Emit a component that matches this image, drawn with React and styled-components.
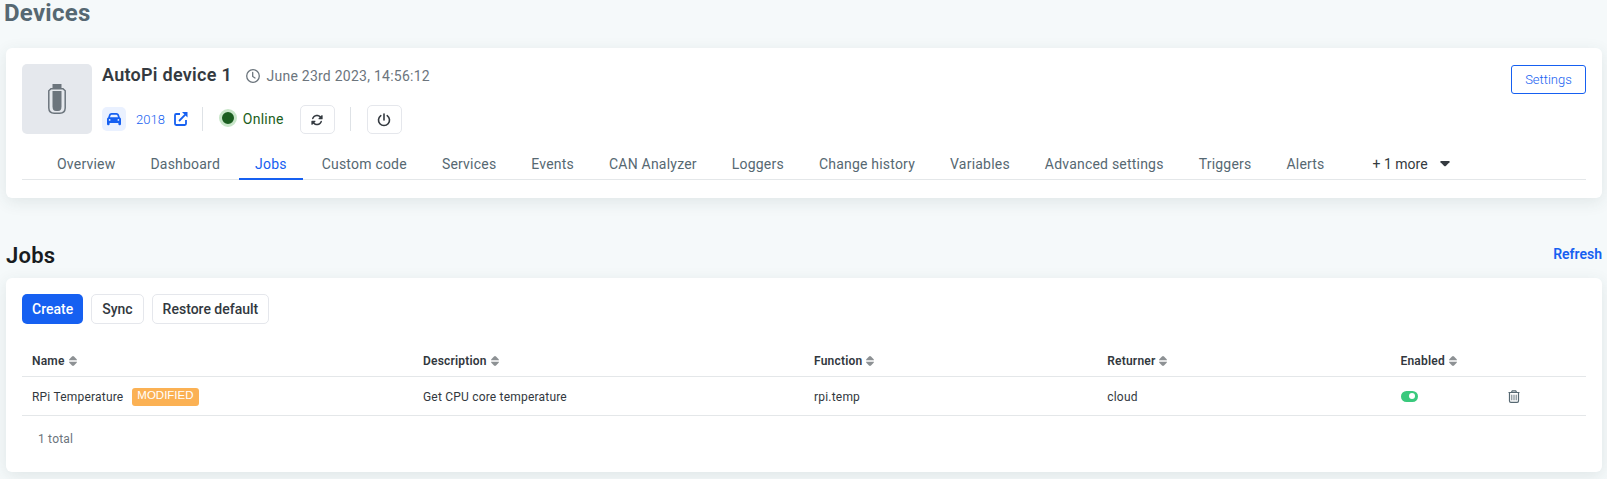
import React from "react";
import styled, { createGlobalStyle, css } from "styled-components";
import { FaCar, FaRotate } from "react-icons/fa6";

const GlobalStyle = createGlobalStyle`
  *, *::before, *::after { box-sizing: border-box; }
  html, body { margin: 0; padding: 0; }
  body {
    background: #f5f9fa;
    color: #32383e;
    font-family: Roboto, "Liberation Sans", sans-serif;
    font-size: 14px;
    overflow: hidden;
  }
  svg { display: block; flex: none; }
`;

const Page = styled.main`
  height: 479px;
  overflow: hidden;
  padding: 0 5px 0 6px;
`;

const PageTitle = styled.h1`
  margin: 0 0 22px -2px;
  height: 26px;
  font-size: 24px;
  line-height: 26px;
  font-weight: 700;
  letter-spacing: 0.25px;
  color: #566872;
`;

const Card = styled.section`
  background: #fff;
  border-radius: 6px;
  padding: 16px;
  box-shadow: 0 4px 16px rgba(40, 70, 70, 0.1);
`;

const DeviceCard = styled(Card)`
  height: 150px;
`;

const DeviceHeader = styled.header`
  display: flex;
  align-items: flex-start;
`;

const Thumb = styled.div`
  width: 70px;
  height: 70px;
  border-radius: 5px;
  background: #e5e8ed;
  display: flex;
  align-items: center;
  justify-content: center;
`;

const DeviceInfo = styled.div`
  flex: 1;
  margin-left: 10px;
`;

const TitleRow = styled.div`
  display: flex;
  align-items: center;
  height: 23px;
`;

const DeviceName = styled.h2`
  margin: 0 14px 2px 0;
  font-size: 18px;
  line-height: 22px;
  font-weight: 600;
  letter-spacing: 0.27px;
  color: #343a40;
`;

const Timestamp = styled.span`
  margin-left: 6.5px;
  color: #6c757d;
  line-height: 22px;
  letter-spacing: 0.25px;
`;

const StatusRow = styled.div`
  display: flex;
  align-items: center;
  height: 29px;
  margin-top: 18px;
`;

const VehicleBadge = styled.span`
  width: 24px;
  height: 24px;
  margin-bottom: 1px;
  border-radius: 5px;
  background: #eaf1ff;
  color: #1660f1;
  display: flex;
  align-items: center;
  justify-content: center;
`;

const VehicleLink = styled.a`
  display: flex;
  align-items: center;
  gap: 9px;
  margin: 0 0 1px 10px;
  color: #1660f1;
  font-weight: 300;
  font-size: 13px;
`;

const Divider = styled.span`
  width: 1px;
  height: 24px;
  background: #dee2e6;
  margin: 0 ${(p) => p.$after}px 1px ${(p) => p.$before}px;
`;

const StatusDot = styled.span`
  width: 18px;
  height: 18px;
  margin-top: -3px;
  border-radius: 50%;
  border: 3px solid #c8e6c9;
  background: #1b5e20;
`;

const StatusText = styled.span`
  margin: 0 16px 2px 6px;
  letter-spacing: 0.25px;
  color: #1b5e20;
`;

const IconButton = styled.button`
  width: 35px;
  height: 29px;
  padding: 0;
  border: 1px solid #e5e7ec;
  border-radius: 5px;
  background: #fff;
  color: #343a40;
  display: flex;
  align-items: center;
  justify-content: center;
`;

const SettingsButton = styled.button`
  width: 75px;
  height: 29px;
  margin-top: 1px;
  padding: 0;
  border: 1px solid #1660f1;
  border-radius: 3px;
  background: #fff;
  color: #1660f1;
  font: 300 13px Roboto, sans-serif;
`;

const Tabs = styled.nav`
  display: flex;
  height: 32px;
  margin-top: 14px;
  padding-left: 19px;
  gap: 3px;
  border-bottom: 1px solid #e4e7e9;
`;

const Tab = styled.a`
  height: 32px;
  padding: 0 16px;
  line-height: 32px;
  letter-spacing: 0.21px;
  color: #566872;
  white-space: nowrap;
  ${(p) =>
    p.$active &&
    css`
      color: #1660f1;
      box-shadow: inset 0 -2px #1660f1;
    `}
`;

const MoreTab = styled.span`
  display: flex;
  align-items: center;
  gap: 12.5px;
  margin-left: 29px;
  color: #343a40;
`;

const SectionHeader = styled.div`
  display: flex;
  justify-content: space-between;
  height: 80px;
  padding-top: 43px;
`;

const SectionTitle = styled.h2`
  margin: 0;
  padding-top: 1px;
  font-size: 22px;
  line-height: 28px;
  font-weight: 600;
  letter-spacing: 0.25px;
  color: #181c20;
`;

const RefreshLink = styled.a`
  color: #1660f1;
  font-weight: 600;
  line-height: 26px;
`;

const JobsCard = styled(Card)`
  height: 194px;
`;

const Actions = styled.div`
  display: flex;
  gap: 8px;
`;

const Button = styled.button`
  height: 30px;
  padding: 0 10px;
  border: ${(p) => (p.$primary ? "0" : "1px solid #e5e7ec")};
  border-radius: 5px;
  background: ${(p) => (p.$primary ? "#1660f1" : "#fff")};
  color: ${(p) => (p.$primary ? "#fff" : "#32383e")};
  font: 500 14px Roboto, sans-serif;
`;

const Table = styled.div`
  margin-top: 21px;
  font-size: 12px;
`;

const Row = styled.div`
  display: grid;
  grid-template-columns: 4fr 4fr 3fr 3fr 1fr 1fr;
  align-items: center;
  height: ${(p) => (p.$head ? 32 : 39)}px;
  border-bottom: 1px solid #e4e7e9;
  font-weight: ${(p) => (p.$head ? 600 : 400)};
  letter-spacing: 0.2px;
`;

const Cell = styled.div`
  display: flex;
  align-items: center;
  padding-left: 10px;
  white-space: nowrap;
`;

const TextCell = styled(Cell)`
  padding-top: 2px;
`;

const TrashCell = styled(Cell)`
  padding-left: 19.5px;
`;

const Badge = styled.span`
  width: 67px;
  height: 18px;
  margin-left: 8.5px;
  border-radius: 3px;
  background: #fbb154;
  color: #fff;
  font: 11.5px/15px "Liberation Sans", sans-serif;
  letter-spacing: 0;
  text-align: center;
`;

const Toggle = styled.span`
  width: 17px;
  height: 11px;
  padding: 0 3px;
  border-radius: 6px;
  background: #3ac97d;
  display: flex;
  align-items: center;
  justify-content: flex-end;
  &::after {
    content: "";
    width: 6px;
    height: 6px;
    border-radius: 50%;
    background: #fff;
  }
`;

const Total = styled.div`
  padding: 16px 16px 0;
  font-size: 12px;
  line-height: 14px;
  letter-spacing: 0.2px;
  color: #6c757d;
`;

const BatteryIcon = () => (
  <svg width="18" height="30" viewBox="0 0 18 30" fill="none">
    <path d="M4.5 0h9v4h-9z" fill="#6c757d" />
    <path d="M3 4.7h12l2.2 2.1V24q-.2 5.2-5.4 5.2H6.2Q1 29.2.8 24V6.8z" stroke="#6c757d" strokeWidth="1.5" />
    <path d="M4.500 7h9v15.500q0 4.500-3.500 4.500H8q-3.500 0-3.500-4.500z" fill="#6c757d" />
  </svg>
);

const ClockIcon = () => (
  <svg width="14" height="14" viewBox="0 0 14 14" fill="none" stroke="#6c757d" strokeWidth="1.300" strokeLinecap="round">
    <circle cx="7" cy="7" r="6.300" />
    <path d="M6.700 3.500v4L9 9" />
  </svg>
);

const PowerIcon = () => (
  <svg width="14" height="14" viewBox="0 0 14 14" fill="none" stroke="currentColor" strokeWidth="1.600" strokeLinecap="round">
    <path d="M7 1v6" />
    <path d="M3.800 2.600a5.500 5.500 0 1 0 6.400 0" />
  </svg>
);

const ExternalIcon = () => (
  <svg width="14" height="14" viewBox="0 0 14 14" fill="none" stroke="#1660f1" strokeWidth="1.800">
    <path d="M6 2H2.200Q1 2 1 3.200v8.600Q1 13 2.200 13h8.600q1.200 0 1.200-1.200V8" />
    <path d="M5 9l6.300-6.300" />
    <path d="M8 0h5.500v5.500z" fill="#1660f1" stroke="none" />
  </svg>
);

const CaretIcon = () => (
  <svg width="10" height="6" viewBox="0 0 10 6" fill="#343a40">
    <path d="M.8 0h8.400q.8.500.3 1.200L5.800 5q-.8.700-1.600 0L.5 1.200Q0 .5.800 0z" />
  </svg>
);

const SortIcon = styled.svg.attrs({ width: 8, height: 10, viewBox: "0 0 8 10" })`
  margin-left: 4px;
  fill: #8d9194;
`;

const TrashIcon = () => (
  <svg width="12" height="13" viewBox="0 0 12 13" fill="none" stroke="#566872" strokeWidth="1">
    <path d="M.5 2.500h11M3.500 2.300l.8-1.500h3.400l.8 1.500M1.500 2.500v8.500q0 1.400 1.400 1.400h6.200q1.400 0 1.400-1.400V2.500" strokeWidth="1.200" />
    <path d="M3.800 4.700v5.600M6 4.700v5.600M8.200 4.700v5.600" strokeWidth=".9" />
  </svg>
);

const tabs = [
  "Overview", "Dashboard", "Jobs", "Custom code", "Services", "Events", "CAN Analyzer",
  "Loggers", "Change history", "Variables", "Advanced settings", "Triggers", "Alerts",
];

const columns = ["Name", "Description", "Function", "Returner", "Enabled"];

export default function App() {
  return (
    <>
      <GlobalStyle />
      <Page>
        <PageTitle>Devices</PageTitle>
        <DeviceCard>
          <DeviceHeader>
            <Thumb><BatteryIcon /></Thumb>
            <DeviceInfo>
              <TitleRow>
                <DeviceName>AutoPi device 1</DeviceName>
                <ClockIcon />
                <Timestamp>June 23rd 2023, 14:56:12</Timestamp>
              </TitleRow>
              <StatusRow>
                <VehicleBadge><FaCar size={14} /></VehicleBadge>
                <VehicleLink>2018 <ExternalIcon /></VehicleLink>
                <Divider $before={14} $after={16} />
                <StatusDot />
                <StatusText>Online</StatusText>
                <IconButton aria-label="Reload"><FaRotate size={12} /></IconButton>
                <Divider $before={15} $after={16} />
                <IconButton aria-label="Power"><PowerIcon /></IconButton>
              </StatusRow>
            </DeviceInfo>
            <SettingsButton>Settings</SettingsButton>
          </DeviceHeader>
          <Tabs>
            {tabs.map((name) => (
              <Tab key={name} $active={name === "Jobs"}>{name}</Tab>
            ))}
            <MoreTab>+ 1 more <CaretIcon /></MoreTab>
          </Tabs>
        </DeviceCard>
        <SectionHeader>
          <SectionTitle>Jobs</SectionTitle>
          <RefreshLink>Refresh</RefreshLink>
        </SectionHeader>
        <JobsCard>
          <Actions>
            <Button $primary>Create</Button>
            <Button>Sync</Button>
            <Button>Restore default</Button>
          </Actions>
          <Table>
            <Row $head>
              {columns.map((name) => (
                <Cell key={name}>
                  {name}
                  <SortIcon>
                    <path d="M0 4.200Q0 3.500.8 2.800L3 .5q1-.9 2 0l2.200 2.300q.8.700.8 1.400zM0 5.800h8q0 .7-.8 1.400L5 9.500q-1 .9-2 0L.8 7.200Q0 6.500 0 5.800z" />
                  </SortIcon>
                </Cell>
              ))}
            </Row>
            <Row>
              <TextCell>RPi Temperature <Badge>MODIFIED</Badge></TextCell>
              <TextCell>Get CPU core temperature</TextCell>
              <TextCell>rpi.temp</TextCell>
              <TextCell>cloud</TextCell>
              <Cell><Toggle /></Cell>
              <TrashCell><TrashIcon /></TrashCell>
            </Row>
          </Table>
          <Total>1 total</Total>
        </JobsCard>
      </Page>
    </>
  );
}
